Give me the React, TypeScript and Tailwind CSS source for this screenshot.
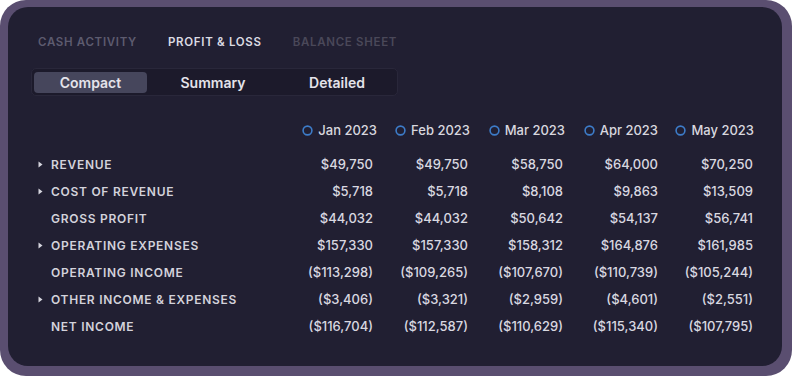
import React from "react";

const months = [
  { name: "Jan 2023", shift: "-mr-[4px]" },
  { name: "Feb 2023", shift: "-mr-[2px]" },
  { name: "Mar 2023", shift: "-mr-[2px]" },
  { name: "Apr 2023", shift: "mr-0" },
  { name: "May 2023", shift: "-mr-[1px]" },
];

const rows: { label: string; expandable: boolean; values: string[] }[] = [
  { label: "REVENUE", expandable: true, values: ["$49,750", "$49,750", "$58,750", "$64,000", "$70,250"] },
  { label: "COST OF REVENUE", expandable: true, values: ["$5,718", "$5,718", "$8,108", "$9,863", "$13,509"] },
  { label: "GROSS PROFIT", expandable: false, values: ["$44,032", "$44,032", "$50,642", "$54,137", "$56,741"] },
  { label: "OPERATING EXPENSES", expandable: true, values: ["$157,330", "$157,330", "$158,312", "$164,876", "$161,985"] },
  { label: "OPERATING INCOME", expandable: false, values: ["($113,298)", "($109,265)", "($107,670)", "($110,739)", "($105,244)"] },
  { label: "OTHER INCOME & EXPENSES", expandable: true, values: ["($3,406)", "($3,321)", "($2,959)", "($4,601)", "($2,551)"] },
  { label: "NET INCOME", expandable: false, values: ["($116,704)", "($112,587)", "($110,629)", "($115,340)", "($107,795)"] },
];

const Caret = () => (
  <svg width="5" height="7" viewBox="0 0 5 7" className="shrink-0">
    <path d="M0.5 0.5 L4.5 3.5 L0.5 6.5 Z" fill="#d6d5de" />
  </svg>
);

const Ring = () => (
  <svg width="11" height="11" viewBox="0 0 11 11" className="shrink-0">
    <circle cx="5.5" cy="5.5" r="4.4" fill="none" stroke="#3d7cc9" strokeWidth="1.6" />
  </svg>
);

export default function App() {
  const grid = "grid grid-cols-[240px_95px_95px_95px_95px_95px] items-center";

  return (
    <div className="w-[792px] h-[376px] bg-white" style={{ fontFamily: "Inter, 'Noto Sans', sans-serif" }}>
      <div className="w-full h-full rounded-[26px] bg-[#5a4e70] pt-[7px] pl-[8px] pr-[10px] pb-[10px]">
        <div className="w-full h-full rounded-[20px] bg-[#211f32] pl-[30px] pr-[29px] pt-[28px]">
          {/* report tabs */}
          <div className="flex items-center gap-[31px] h-[16px] text-[11.5px] font-semibold tracking-[0.06em]">
            <span className="text-[#5d5b6f]">CASH ACTIVITY</span>
            <span className="text-[#dcdbe3]">PROFIT &amp; LOSS</span>
            <span className="text-[#4a4859]">BALANCE SHEET</span>
          </div>

          {/* view switch */}
          <div className="mt-[17px] -ml-[7px] flex w-fit h-[28px] items-center rounded-[5px] border border-[#29273a] bg-[#1c1a2b] px-[2px] text-[14px] font-semibold text-[#e4e3ea]">
            <div className="w-[113px] h-[21px] flex items-center justify-center rounded-[4px] bg-[#46465c]">Compact</div>
            <div className="w-[132px] h-[21px] flex items-center justify-center">Summary</div>
            <div className="w-[116px] h-[21px] flex items-center justify-center">Detailed</div>
          </div>

          {/* month headers */}
          <div className={`${grid} mt-[21px] h-[27px] text-[13px] font-medium text-[#d8d7df]`}>
            <div />
            {months.map((m) => (
              <div key={m.name} className={`flex items-center justify-end gap-[5px] ${m.shift}`}>
                <Ring />
                <span>{m.name}</span>
              </div>
            ))}
          </div>

          {/* rows */}
          <div className="mt-[7px]">
            {rows.map((r) => (
              <div key={r.label} className={`${grid} h-[27px]`}>
                <div className="flex items-center text-[12px] font-semibold tracking-[0.06em] text-[#d3d2db]">
                  <span className="w-[13px] flex items-center">{r.expandable && <Caret />}</span>
                  <span>{r.label}</span>
                </div>
                {r.values.map((v, i) => (
                  <div key={i} className="text-right text-[13px] font-medium text-[#d9d8e0]">
                    {v}
                  </div>
                ))}
              </div>
            ))}
          </div>
        </div>
      </div>
    </div>
  );
}
